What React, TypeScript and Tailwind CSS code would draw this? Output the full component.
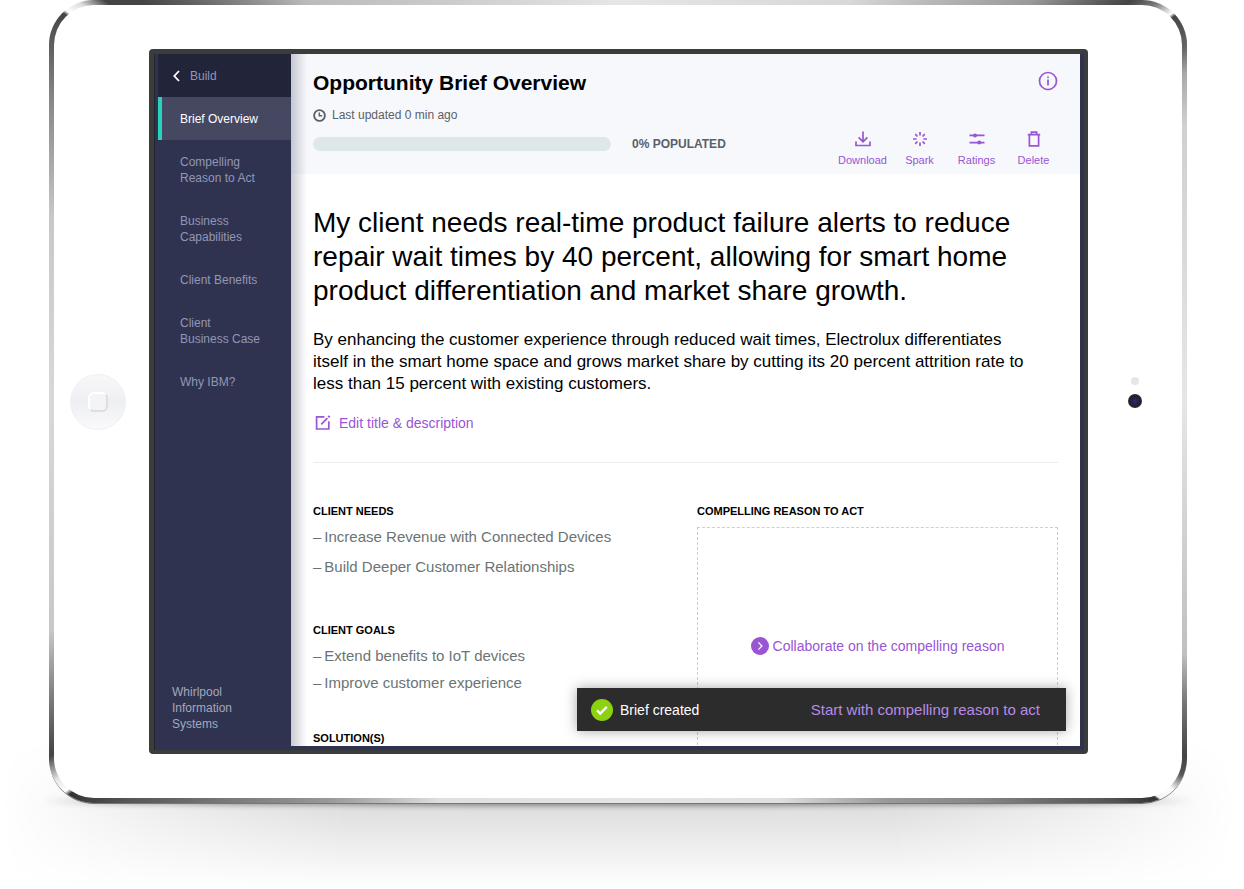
import React from "react";

type IconProps = { className?: string };

const DownloadIcon = ({ className }: IconProps) => (
  <svg viewBox="0 0 16 16" className={className} fill="none" stroke="currentColor" strokeWidth="1.7" aria-hidden="true">
    <path d="M8 .5v10.3M3.6 6.4 8 10.8l4.4-4.4M1 10.4v4.1h14v-4.1" />
  </svg>
);

const SparkIcon = ({ className }: IconProps) => (
  <svg viewBox="0 0 16 16" className={className} fill="none" stroke="currentColor" strokeWidth="1.7" aria-hidden="true">
    <path d="M8 1v3.6M8 11.4V15M1 8h3.6M11.4 8H15M3.2 3.2l2.3 2.3M10.5 10.5l2.3 2.3M12.8 3.2l-2.3 2.3M5.5 10.5l-2.3 2.3" />
  </svg>
);

const RatingsIcon = ({ className }: IconProps) => (
  <svg viewBox="0 0 16 16" className={className} fill="none" stroke="currentColor" strokeWidth="1.8" aria-hidden="true">
    <path d="M.5 4.4h15M.5 11.6h15" />
    <circle cx="6" cy="4.4" r="2" fill="currentColor" stroke="none" />
    <circle cx="10.2" cy="11.6" r="2" fill="currentColor" stroke="none" />
  </svg>
);

const TrashIcon = ({ className }: IconProps) => (
  <svg viewBox="0 0 16 16" className={className} fill="none" stroke="currentColor" strokeWidth="1.7" aria-hidden="true">
    <path d="M1.8 3.7h12.4M5.4 3.5V1.2h5.2v2.3M3.4 3.7v11.1h9.2V3.7" />
  </svg>
);

const InfoIcon = ({ className }: IconProps) => (
  <svg viewBox="0 0 20 20" className={className} fill="none" stroke="currentColor" strokeWidth="1.7" aria-hidden="true">
    <circle cx="10" cy="10" r="8.5" />
    <path d="M10 8.6v6M10 5.4v1.7" />
  </svg>
);

const ClockIcon = ({ className }: IconProps) => (
  <svg viewBox="0 0 14 14" className={className} fill="none" stroke="currentColor" strokeWidth="2" aria-hidden="true">
    <circle cx="7" cy="7" r="5.8" />
    <path d="M6.8 3.8v3.5h3.1" strokeWidth="1.6" />
  </svg>
);

const EditIcon = ({ className }: IconProps) => (
  <svg viewBox="0 0 16 16" className={className} fill="none" stroke="currentColor" strokeWidth="1.7" aria-hidden="true">
    <path d="M9.4 1.8H1.6V14h12.2V6.2M6.2 9.4l6.2-6.2" />
    <path d="m13.3 2.3 1.3-1.3" strokeWidth="2.2" />
  </svg>
);

const actions = [
  { label: "Download", Icon: DownloadIcon },
  { label: "Spark", Icon: SparkIcon },
  { label: "Ratings", Icon: RatingsIcon },
  { label: "Delete", Icon: TrashIcon },
];

const sections = [
  ["Compelling", "Reason to Act"],
  ["Business", "Capabilities"],
  ["Client Benefits"],
  ["Client", "Business Case"],
  ["Why IBM?"],
];

const Heading = ({ children }: { children: React.ReactNode }) => (
  <h3 className="text-[11px] leading-4 font-bold text-black">{children}</h3>
);

const DashList = ({ items, className }: { items: string[]; className: string }) => (
  <ul className={`flex flex-col text-[15px] leading-5 text-[#6b7475] ${className}`}>
    {items.map((item) => (
      <li key={item} className="flex gap-[3px]">
        <span>–</span>
        <span>{item}</span>
      </li>
    ))}
  </ul>
);

function Sidebar() {
  return (
    <nav className="flex w-[133px] shrink-0 flex-col text-[12px] leading-4 text-[#9296b8]">
      <a href="#build" className="flex h-[43px] items-center gap-2.5 bg-[#22253a] pl-[15px]">
        <svg viewBox="0 0 7 12" className="h-3 w-[7px]" fill="none" stroke="#fff" strokeWidth="1.8" aria-hidden="true">
          <path d="M6 1 1.3 6 6 11" />
        </svg>
        Build
      </a>
      <a href="#overview" aria-current="page" className="flex h-[43px] items-center border-l-4 border-[#27d3bc] bg-[#454860] pl-[18px] text-white">
        Brief Overview
      </a>
      <ul className="flex flex-col gap-[27px] pt-[14px] pl-[22px]">
        {sections.map((lines) => (
          <li key={lines[0]}>
            <a href="#section" className="flex flex-col">
              {lines.map((line) => (
                <span key={line}>{line}</span>
              ))}
            </a>
          </li>
        ))}
      </ul>
      <p className="mt-auto w-24 pb-[14px] pl-[14px] text-[#a5a8bb]">Whirlpool Information Systems</p>
    </nav>
  );
}

function BriefHeader() {
  return (
    <header className="flex justify-between bg-[#f7f8fc] pt-4 pr-[18px] pb-[7px] pl-[22px]">
      <div className="pb-4">
        <h1 className="text-[21px] leading-[26px] font-bold text-black">Opportunity Brief Overview</h1>
        <p className="mt-[9px] flex items-center gap-1.5 text-[12px] leading-5 text-[#5a6068]">
          <ClockIcon className="size-[13px]" />
          Last updated 0 min ago
        </p>
        <div className="mt-3 flex h-3.5 items-center gap-[21px]">
          <div role="progressbar" aria-valuenow={0} aria-label="Populated" className="h-full w-[298px] rounded-full bg-[#dfe8e9]" />
          <span className="text-[12px] leading-4 font-bold text-[#5a6068]">0% POPULATED</span>
        </div>
      </div>
      <div className="flex flex-col items-end justify-between text-[#9855d4]">
        <button type="button" aria-label="Information" className="mt-px mr-1">
          <InfoIcon className="size-5" />
        </button>
        <div className="grid grid-cols-4">
          {actions.map(({ label, Icon }) => (
            <button key={label} type="button" className="flex w-[57px] flex-col items-center gap-1.5 text-[11px] leading-[14px]">
              <Icon className="size-4" />
              {label}
            </button>
          ))}
        </div>
      </div>
    </header>
  );
}

function Toast() {
  return (
    <div role="status" className="absolute right-[14px] bottom-[15px] flex h-[43px] w-[489px] items-center justify-between bg-[#2c2c2c] pr-[26px] pl-[14px] leading-5 shadow-[0_0_12px_rgba(0,0,0,0.35)]">
      <span className="flex items-center gap-[7px] text-[14px] text-white">
        <svg viewBox="0 0 22 22" className="size-[22px]" aria-hidden="true">
          <circle cx="11" cy="11" r="11" fill="#8bd311" />
          <path d="m6 11.3 3.2 3.2 6.6-6.6" fill="none" stroke="#fff" strokeWidth="2.4" />
        </svg>
        Brief created
      </span>
      <a href="#reason" className="text-[15px] text-[#b78be6]">Start with compelling reason to act</a>
    </div>
  );
}

function BriefBody() {
  return (
    <main className="min-h-0 flex-1 overflow-hidden px-[22px] pt-8">
      <h2 className="text-[28px] leading-[34px] text-black">
        My client needs real-time product failure alerts to reduce repair wait times by 40 percent, allowing for smart home product differentiation and market share growth.
      </h2>
      <p className="mt-[21px] max-w-[720px] text-[17px] leading-[22px] text-black">
        By enhancing the customer experience through reduced wait times, Electrolux differentiates itself in the smart home space and grows market share by cutting its 20 percent attrition rate to less than 15 percent with existing customers.
      </p>
      <a href="#edit" className="mt-[18px] flex w-fit items-center gap-2 pl-0.5 text-[14px] leading-5 text-[#9855d4]">
        <EditIcon className="size-4" />
        Edit title &amp; description
      </a>
      <div className="mt-[29px] grid grid-cols-[384fr_361fr] border-t border-[#e9eeef] pt-10">
        <div>
          <Heading>CLIENT NEEDS</Heading>
          <DashList items={["Increase Revenue with Connected Devices", "Build Deeper Customer Relationships"]} className="mt-2 gap-2.5" />
          <div className="mt-[45px]">
            <Heading>CLIENT GOALS</Heading>
          </div>
          <DashList items={["Extend benefits to IoT devices", "Improve customer experience"]} className="mt-2 gap-[7px]" />
          <div className="mt-[37px]">
            <Heading>SOLUTION(S)</Heading>
          </div>
        </div>
        <div>
          <Heading>COMPELLING REASON TO ACT</Heading>
          <div className="mt-2 flex h-[238px] items-center justify-center border border-dashed border-[#cfcfcf]">
            <a href="#collaborate" className="flex items-center gap-1 text-[14px] leading-5 text-[#9855d4]">
              <svg viewBox="0 0 18 18" className="size-[18px]" aria-hidden="true">
                <circle cx="9" cy="9" r="9" fill="#9855d4" />
                <path d="m7.4 5.4 3.5 3.6-3.5 3.6" fill="none" stroke="#fff" strokeWidth="1.3" />
              </svg>
              Collaborate on the compelling reason
            </a>
          </div>
        </div>
      </div>
    </main>
  );
}

export default function App() {
  return (
    <div className="isolate min-h-screen overflow-hidden bg-white pr-[57px] pb-[86px] pl-[49px] font-['Liberation_Sans',Arial,sans-serif]">
      <div className="relative">
        <div className="absolute -inset-x-12 top-full -z-10 -mt-16 h-[150px] bg-linear-to-b from-transparent via-black/13 via-45% to-transparent mask-[linear-gradient(to_right,transparent,rgba(0,0,0,0.5)_12%,#000_28%,#000_72%,rgba(0,0,0,0.5)_88%,transparent)]" />
        <div className="absolute -inset-x-3 -bottom-0.5 -z-10 h-2 bg-[radial-gradient(closest-side,#000_90%,transparent)] opacity-50 blur-[3px]" />
        <div className="flex aspect-[1138/803] items-stretch rounded-[45px] border-[5px] border-transparent pt-11 pb-11 shadow-[0_1px_0_#777] [background:linear-gradient(#fff,#fff)_padding-box,conic-gradient(#e6e6e6,#d8d8d8_30deg,#999_46deg,#444_52deg,#777_53.5deg,#fff_55deg,#444_55.3deg,#666_58deg,#aaa_60deg,#d0d0d0_64deg,#e6e6e6_90deg,#c0c0c0_114deg,#777_118deg,#444_122deg,#555_123.5deg,#fff_125deg,#f4f4f4_126.2deg,#333_126.4deg,#555_129deg,#888_138deg,#999_146deg,#e0e0e0_158deg,#e4e4e4_180deg,#e0e0e0_204deg,#999_216deg,#777_225deg,#555_231deg,#333_234.4deg,#fff_234.8deg,#e8e8e8_236deg,#444_238deg,#777_242deg,#c8c8c8_248deg,#d8d8d8_270deg,#c8c8c8_288deg,#888_298deg,#444_305deg,#fff_305.3deg,#ddd_306.5deg,#444_308deg,#444_310deg,#6a6a6a_314deg,#bbb_322deg,#e6e6e6)_border-box]">
          <div className="flex w-[95px] shrink-0 items-center justify-center pr-2">
            <button type="button" aria-label="Home" className="flex size-14 items-center justify-center rounded-full border border-[#f0f0f3] bg-linear-to-b from-[#f8f8fa] from-0% via-[#eeeff3] via-50% to-[#fafafc] to-100%">
              <span className="size-5 rounded-md border-2 border-[#dddde2] border-t-white border-l-white bg-[#f4f4f7]" />
            </button>
          </div>
          <div className="flex min-w-0 flex-1 rounded-[4px] border-t-[5px] border-r-4 border-b-4 border-l-[5px] border-[#3b3c3c] bg-[#2f334f] pr-1 pb-1 pl-1 shadow-[inset_1px_0_0_#22252c]">
            <Sidebar />
            <div className="relative flex min-w-0 flex-1 flex-col bg-white">
              <BriefHeader />
              <BriefBody />
              <div className="pointer-events-none absolute inset-y-0 left-0 w-4 bg-linear-to-r from-[#2f334f]/25 to-transparent" />
              <Toast />
            </div>
          </div>
          <div className="flex w-[94px] shrink-0 flex-col items-center justify-center gap-[9px] pb-[18px]">
            <span className="size-2 rounded-full bg-[#e6e6e8]" />
            <span className="size-3.5 rounded-full bg-[radial-gradient(circle,#2a2a90_0%,#22224a_30%,#222_55%,#444_100%)]" />
          </div>
        </div>
      </div>
    </div>
  );
}
